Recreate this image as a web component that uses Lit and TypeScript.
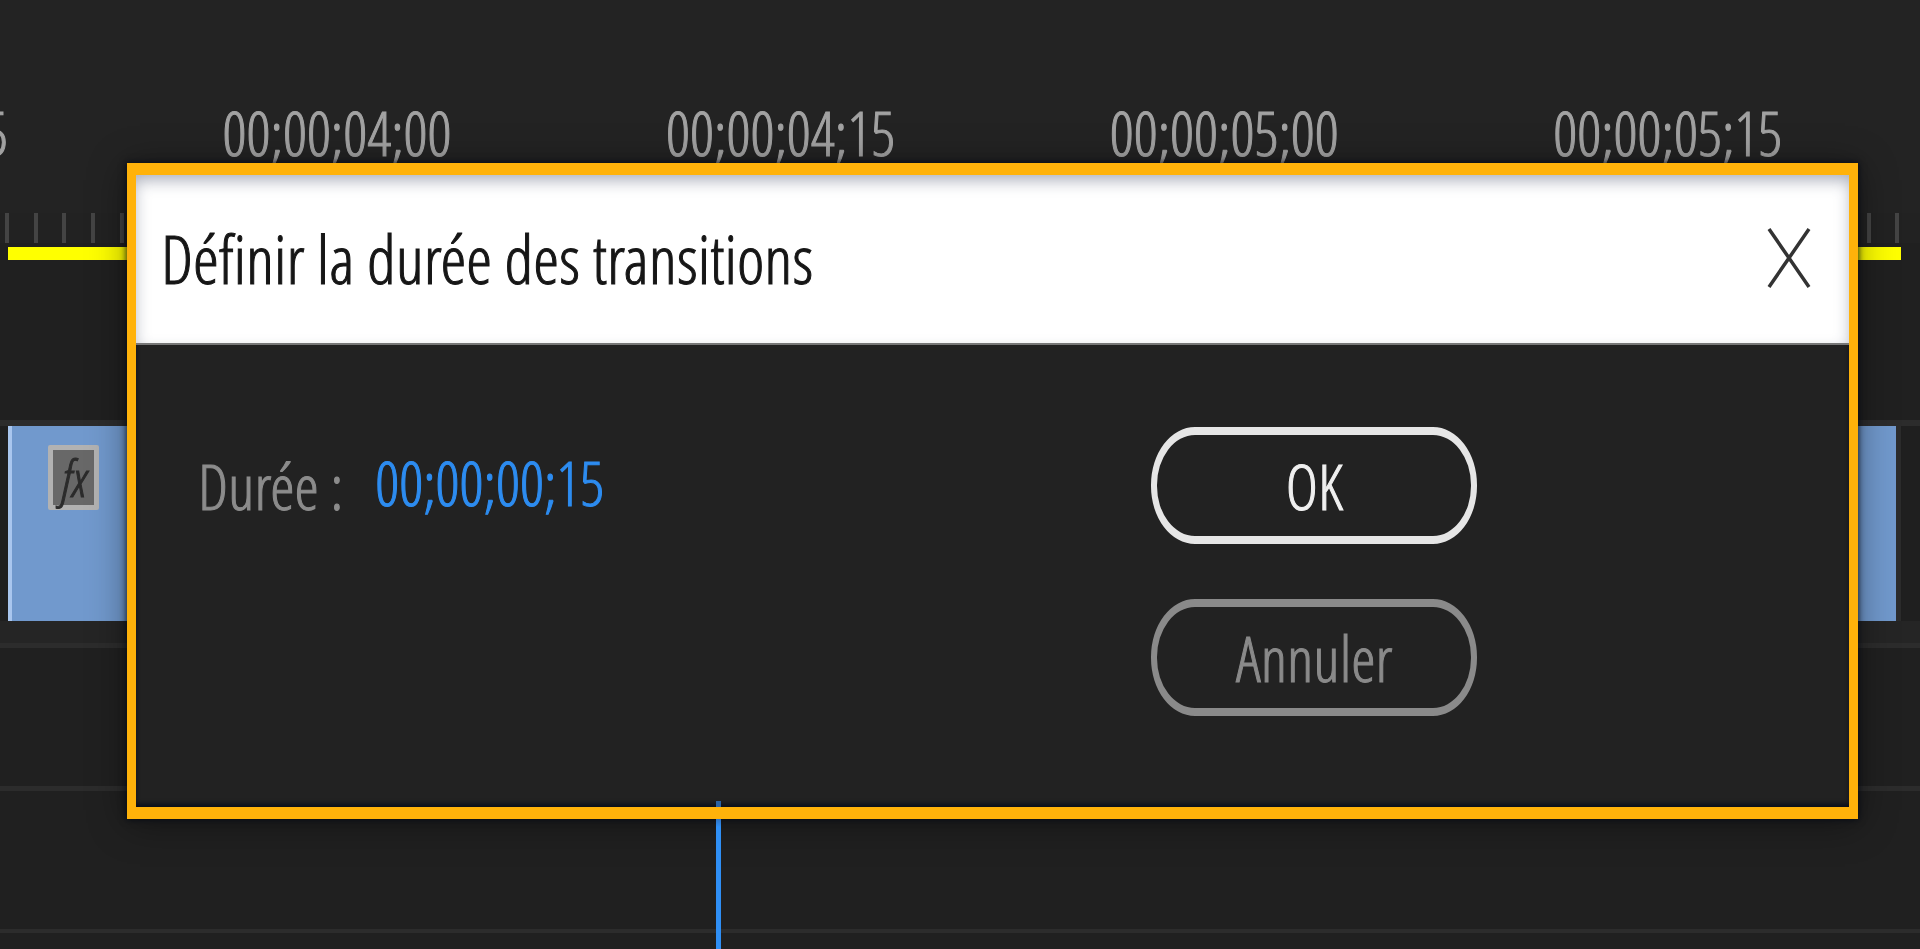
import { LitElement, html, css } from "lit";
import { customElement, property, state } from "lit/decorators.js";

@customElement("timeline-panel")
class TimelinePanel extends LitElement {
  @property({ attribute: false }) labels: string[] = [];

  static styles = css`
    :host {
      display: grid;
      grid-template-rows: 213fr 30fr 4fr 13fr 160fr 6fr 195fr 22fr 5fr 138fr 5fr 138fr 4fr 16fr;
      height: 100%;
      overflow: hidden;
      background: #202020;
    }
    .labels {
      display: flex;
      padding-top: 93px;
      margin-left: -17.1%;
      background: #232323;
      color: #a2a2a2;
      font-size: 60px;
      line-height: 80px;
      overflow: hidden;
    }
    .label {
      flex: 0 0 19.73%;
      text-align: center;
      -webkit-text-stroke: 1px currentColor;
    }
    .ticks {
      display: flex;
      justify-content: space-between;
      padding: 0 20px 0 5px;
      background: #222;
    }
    .tick {
      width: 4px;
      background: #444;
    }
    .spacer {
      background: #202020;
    }
    .work-area {
      margin: 0 19px 0 8px;
      background: #ff0;
    }
    .line {
      background: #2c2c2c;
    }
    .gutter {
      background: #252525;
    }
    .track {
      display: flex;
      padding: 0 19px 0 8px;
      background: #1f1f1f;
    }
    .clip {
      flex: 1;
      box-sizing: border-box;
      padding: 19px 0 0 36px;
      background: #7199cd;
      border-left: 4px solid #a9c6ee;
      box-shadow: 5px 0 0 #2c2c2c;
      margin-right: 5px;
    }
    .badge {
      display: flex;
      justify-content: center;
      align-items: center;
      box-sizing: border-box;
      width: 51px;
      height: 65px;
      border: 5px solid #b2b2b2;
      border-radius: 2px;
      background: #686868;
      color: #2b2b2b;
      font-size: 50px;
      line-height: 50px;
      font-style: italic;
      -webkit-text-stroke: 1px currentColor;
    }
  `;

  render() {
    return html`
      <div class="labels">${this.labels.map((t) => html`<span class="label">${t}</span>`)}</div>
      <div class="ticks">${Array.from({ length: 67 }, () => html`<i class="tick"></i>`)}</div>
      <div class="spacer"></div>
      <div class="work-area"></div>
      <div class="spacer"></div>
      <div class="line"></div>
      <div class="track"><div class="clip"><span class="badge">fx</span></div></div>
      <div class="gutter"></div>
      <div class="line"></div>
      <div class="spacer"></div>
      <div class="line"></div>
      <div class="spacer"></div>
      <div class="line"></div>
      <div class="spacer"></div>
    `;
  }
}

@customElement("duration-dialog")
class DurationDialog extends LitElement {
  @state() private duration = "00;00;00;15";

  static styles = css`
    :host {
      display: block;
      border: solid #ffb20a;
      border-width: 12px 9px;
      background: #222;
      box-shadow: 0 0 6px 1px rgba(0, 8, 20, 0.7), 0 4px 36px rgba(0, 0, 0, 0.4);
    }
    .header {
      display: flex;
      justify-content: space-between;
      align-items: center;
      box-sizing: border-box;
      height: 170px;
      padding: 0 36px 2px 25px;
      background: #fff;
      border-bottom: 2px solid #777;
      box-shadow: inset 0 7px 16px -2px rgba(40, 50, 80, 0.4);
    }
    .title {
      margin: 0;
      color: #161616;
      font-size: 66px;
      line-height: 90px;
      font-weight: normal;
      -webkit-text-stroke: 1px currentColor;
    }
    button,
    input {
      font: inherit;
      background: none;
      border: 0;
      padding: 0;
      -webkit-text-stroke: 1px currentColor;
    }
    .close {
      display: flex;
      color: #333;
    }
    .body {
      display: flex;
      justify-content: space-between;
      align-items: flex-start;
      padding: 82px 21.7% 91px 62px;
      box-shadow: inset 0 -4px 5px -1px rgba(0, 8, 24, 0.8);
    }
    .field {
      display: flex;
      align-items: center;
      gap: 32px;
      height: 117px;
      color: #8c8c8c;
    }
    label {
      font-size: 62px;
      line-height: 80px;
      -webkit-text-stroke: 1px currentColor;
    }
    .duration {
      width: 260px;
      height: 80px;
      padding-bottom: 6px;
      color: #2d8cf0;
      font-size: 60px;
      line-height: 80px;
      outline: none;
    }
    .actions {
      display: grid;
      gap: 55px;
    }
    .action {
      box-sizing: border-box;
      width: 326px;
      height: 117px;
      border: solid #8a8a8a;
      border-width: 8px 6px;
      border-radius: 44px / 58px;
      color: #8a8a8a;
      font-size: 62px;
      line-height: 80px;
    }
    .primary {
      border-color: #e6e6e6;
      color: #f0f0f0;
    }
  `;

  render() {
    return html`
      <div class="header">
        <h1 class="title">Définir la durée des transitions</h1>
        <button class="close" aria-label="Fermer">
          <svg width="48" height="64" viewBox="0 0 48 64" fill="none" stroke="currentColor" stroke-width="3.5">
            <path d="M4 3 L44 61 M44 3 L4 61" />
          </svg>
        </button>
      </div>
      <div class="body">
        <div class="field">
          <label for="duration">Durée :</label>
          <input
            id="duration"
            class="duration"
            .value=${this.duration}
            @input=${(e: Event) => (this.duration = (e.target as HTMLInputElement).value)}
          />
        </div>
        <div class="actions">
          <button class="action primary">OK</button>
          <button class="action">Annuler</button>
        </div>
      </div>
    `;
  }
}

@customElement("app-root")
class AppRoot extends LitElement {
  static styles = css`
    :host {
      display: block;
      position: relative;
      height: 100vh;
      overflow: hidden;
      font-family: "Open Sans Condensed Light", "Open Sans Condensed", "Roboto Condensed", sans-serif;
    }
    .dialog {
      position: absolute;
      top: 163px;
      left: 127px;
      right: 62px;
    }
    .playhead {
      position: absolute;
      top: 801px;
      bottom: 0;
      left: 37.3%;
      width: 5px;
      background: linear-gradient(#2a62a4 6px, transparent 6px 18px, #2f72c0 18px, #2f8ff5 26px);
    }
  `;

  render() {
    return html`
      <timeline-panel
        .labels=${["00;00;03;15", "00;00;04;00", "00;00;04;15", "00;00;05;00", "00;00;05;15"]}
      ></timeline-panel>
      <duration-dialog class="dialog"></duration-dialog>
      <div class="playhead"></div>
    `;
  }
}
